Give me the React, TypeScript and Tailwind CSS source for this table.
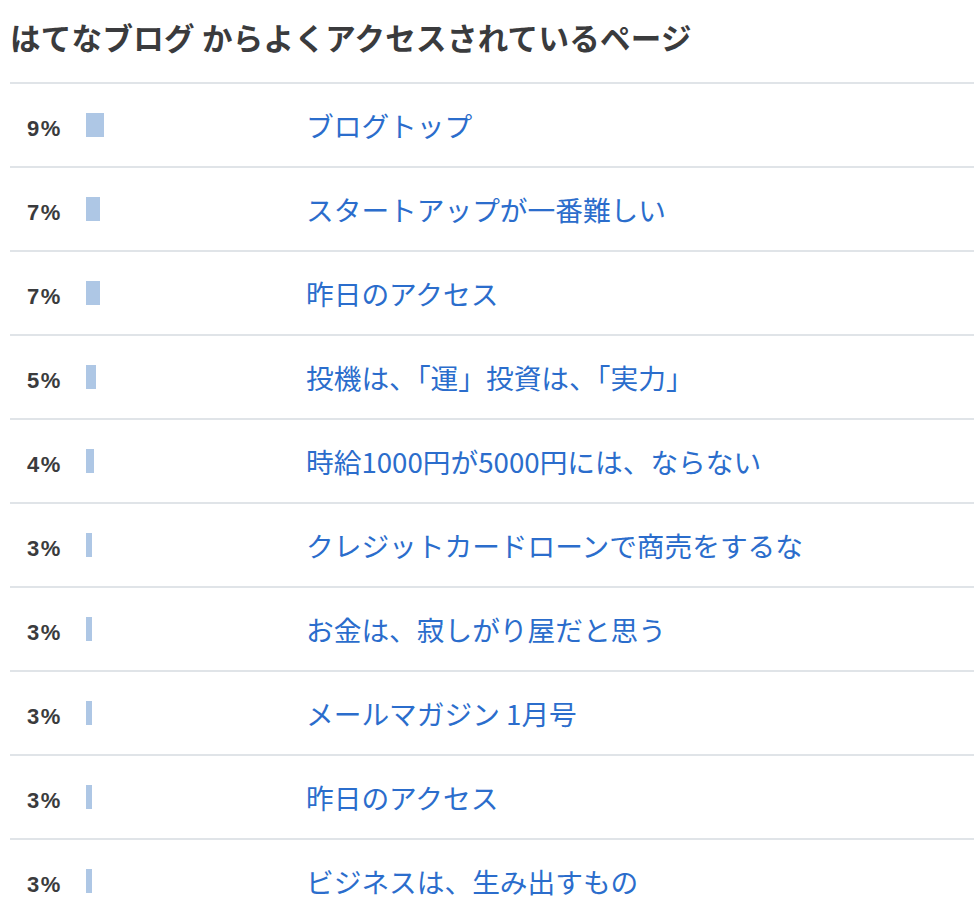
import React from "react";

interface PageRow {
  pct: number;
  title: string;
}

const rows: PageRow[] = [
  { pct: 9, title: "ブログトップ" },
  { pct: 7, title: "スタートアップが一番難しい" },
  { pct: 7, title: "昨日のアクセス" },
  { pct: 5, title: "投機は、「運」投資は、「実力」" },
  { pct: 4, title: "時給1000円が5000円には、ならない" },
  { pct: 3, title: "クレジットカードローンで商売をするな" },
  { pct: 3, title: "お金は、寂しがり屋だと思う" },
  { pct: 3, title: "メールマガジン 1月号" },
  { pct: 3, title: "昨日のアクセス" },
  { pct: 3, title: "ビジネスは、生み出すもの" },
];

const jp = "font-['Noto_Sans_CJK_JP','Noto_Sans',sans-serif]";

const App: React.FC = () => {
  return (
    <div className={`min-h-screen bg-white pl-[10px] ${jp}`}>
      <h1 className="h-[82px] flex items-center pb-[6px] text-[30.5px] font-bold text-[#3a3b3d] tracking-[0.3px]">
        はてなブログ からよくアクセスされているページ
      </h1>
      <ul>
        {rows.map((row, i) => (
          <li
            key={i}
            className="h-[84px] flex items-center border-t-2 border-[#e0e4e8] pl-[17px]"
          >
            <span className="w-[59px] pt-[6px] font-['Liberation_Sans',sans-serif] font-bold text-[22px] tracking-[1.5px] text-[#3a3b3d]">
              {row.pct}%
            </span>
            <span className="w-[220px] flex">
              <span
                className="h-[24px] bg-[#aec7e5]"
                style={{ width: row.pct * 2 }}
              />
            </span>
            <a href="#" className="text-[27.7px] text-[#2b6dcc] pt-[2px]">
              {row.title}
            </a>
          </li>
        ))}
      </ul>
    </div>
  );
};

export default App;
